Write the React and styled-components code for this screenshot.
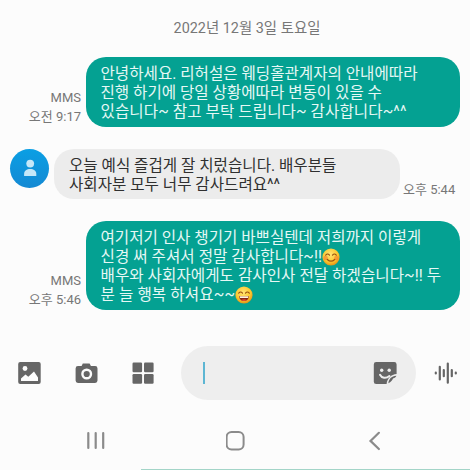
import React from 'react'
import styled, { createGlobalStyle } from 'styled-components'

const GlobalStyle = createGlobalStyle`
    * {
        box-sizing: border-box;
    }

    body {
        margin: 0;
        background: #fcfcfc;
        font-family: Roboto, 'Noto Sans CJK KR', sans-serif;
    }
`

const Screen = styled.main`
    width: 470px;
    height: 470px;
    overflow: hidden;
    display: flex;
    flex-direction: column;
    background: #fcfcfc;
`

const DateLabel = styled.div`
    height: 57px;
    line-height: 20px;
    padding-top: 19px;
    padding-left: 24px;
    text-align: center;
    font-size: 14.4px;
    color: #777;
    white-space: nowrap;
`

const Thread = styled.section`
    height: 289px;
    display: flex;
    flex-direction: column;
    gap: 22px;
`

const Message = styled.div`
    display: flex;
    align-items: flex-end;
    justify-content: ${props => props.$sent ? 'flex-end' : 'flex-start'};
    padding: 0 10px;
`

const Bubble = styled.div`
    width: ${props => props.$sent ? 374 : 346}px;
    padding: ${props => props.$sent ? '8px 14.5px 5px' : '8px 15px 4.5px'};
    border-radius: 20px;
    background: ${props => props.$sent ? '#04a192' : '#ececec'};
    color: ${props => props.$sent ? '#e6f8f5' : '#303030'};
    font-size: 15.6px;
`

const Line = styled.div`
    height: 18.9px;
    line-height: 18.9px;
    white-space: nowrap;
    letter-spacing: ${props => props.$spacing || 0}px;

    svg {
        vertical-align: -4px;
    }
`

const Meta = styled.div`
    margin: ${props => props.$sent ? '0 5px 0.5px 0' : '0 0 0 3px'};
    font-size: 13px;
    line-height: 19px;
    text-align: right;
    white-space: nowrap;
    color: #777;
`

const Avatar = styled.div`
    align-self: flex-start;
    width: 39px;
    height: 39px;
    margin-right: 5px;
    border-radius: 50%;
    background: linear-gradient(180deg, #0a9fe4, #1489d3);
    display: flex;
    align-items: center;
    justify-content: center;
`

const Toolbar = styled.div`
    height: 54px;
    display: flex;
    align-items: center;
    padding: 0 11px 0 17px;
    color: #666;
`

const Tools = styled.div`
    width: 163.5px;
    display: flex;
    gap: 32.5px;
`

const Input = styled.div`
    width: 235.5px;
    height: 54px;
    margin-right: 18px;
    padding: 0 19px 0 22px;
    border-radius: 27px;
    background: #eee;
    display: flex;
    align-items: center;
    justify-content: space-between;
`

const Caret = styled.span`
    width: 2px;
    height: 22px;
    background: #5db6d3;
`

const NavBar = styled.nav`
    height: 69px;
    display: flex;
    justify-content: space-between;
    padding: 30px 84px 0;
    color: #8b8b8b;
`

const Peek = styled.div`
    height: 1px;
    margin-left: 141px;
    background: #a3d5c8;
`

const PersonIcon = () => (
    <svg width='14' height='18' viewBox='0 0 14 18' fill='#c5e7f8'>
        <circle cx='7.2' cy='4.6' r='3.9' />
        <path d='M1.1 17v-2c0-3.200 2.700-4.900 6.100-4.900s6.100 1.700 6.100 4.900v2z' />
    </svg>
)

const ImageIcon = () => (
    <svg width='24' height='24' viewBox='0 0 24 24'>
        <rect x='1.2' y='1' width='22.5' height='22' rx='2' fill='currentColor' />
        <circle cx='8' cy='7.5' r='2.4' fill='#fcfcfc' />
        <path d='M4 20v-2.5l4.5-4 2.8 2.2 5.7-5.2 4 6V20z' fill='#fcfcfc' />
    </svg>
)

const CameraIcon = () => (
    <svg width='24' height='24' viewBox='0 0 24 24'>
        <path d='M4 5h3.6l1.2-2.6h6.8L16.9 5h4.2a2.4 2.4 0 0 1 2.4 2.4v12.2a2.4 2.4 0 0 1-2.4 2.4H4a2.4 2.4 0 0 1-2.4-2.4V7.4A2.4 2.4 0 0 1 4 5z' fill='currentColor' />
        <circle cx='12.7' cy='13' r='4.3' fill='none' stroke='#fcfcfc' strokeWidth='2.4' />
    </svg>
)

const GridIcon = () => (
    <svg width='24' height='24' viewBox='0 0 24 24' fill='currentColor'>
        <rect x='2.5' y='1.5' width='9.6' height='9.7' rx='1.2' />
        <rect x='14' y='1.5' width='9.6' height='9.7' rx='1.2' />
        <rect x='2.5' y='13' width='9.6' height='9.7' rx='1.2' />
        <rect x='14' y='13' width='9.6' height='9.7' rx='1.2' />
    </svg>
)

// square note with a smile, bottom right corner peels away
const StickerIcon = () => (
    <svg width='24' height='24' viewBox='0 0 24 24'>
        <path d='M3.2 1h18a2.4 2.4 0 0 1 2.4 2.4V13c-5.300.3-9.500 4.500-10 10.100H3.200A2.400 2.400 0 0 1 .8 20.700V3.400A2.400 2.400 0 0 1 3.200 1z' fill='currentColor' />
        <circle cx='8.7' cy='9.2' r='1.7' fill='#eee' />
        <circle cx='16.2' cy='9.2' r='1.7' fill='#eee' />
        <path d='M7 13.800c1.700 3.400 6 4.200 9.400 1.200' fill='none' stroke='#eee' strokeWidth='2' strokeLinecap='round' />
        <path d='M15.400 22.200c.3-4.200 3-7 8-7.500-.6 1.500-1.600 2.200-3.400 2.700-.5 1.900-2.100 3.500-4.600 4.800z' fill='currentColor' />
    </svg>
)

const WaveIcon = () => (
    <svg width='24' height='24' viewBox='0 0 24 24' stroke='currentColor' strokeWidth='2.2' strokeLinecap='round'>
        <path d='M1.800 11.700v.8M5.800 5.800v12.600M9.800 9v6.200M13.800 2.500v19.200M17.800 9v6.200M21.800 11.700v.8' />
    </svg>
)

const RecentsIcon = () => (
    <svg width='24' height='22' viewBox='0 0 24 22' stroke='currentColor' strokeWidth='2.2' strokeLinecap='round'>
        <path d='M4.300 3v15M11.700 3v15M19.200 3v15' />
    </svg>
)

const HomeIcon = () => (
    <svg width='22' height='22' viewBox='0 0 22 22' fill='none' stroke='currentColor' strokeWidth='2'>
        <rect x='1' y='2' width='17' height='17.5' rx='5' transform='translate(-.4 0)' />
    </svg>
)

const BackIcon = () => (
    <svg width='20' height='22' viewBox='0 0 20 22' fill='none' stroke='currentColor' strokeWidth='2.2' strokeLinecap='round'>
        <path d='M12.900 2.800L4.500 10.900l8.400 8.100' />
    </svg>
)

const Emoji = ({ laughing }) => (
    <svg width='18' height='18' viewBox='0 0 18 18' fill='none' strokeLinecap='round'>
        <defs>
            <radialGradient id={laughing ? 'laugh' : 'smile'} cx='.45' cy='.35' r='.65'>
                <stop offset='0' stopColor='#ffe476' />
                <stop offset='.65' stopColor='#fcc92f' />
                <stop offset='1' stopColor='#e39216' />
            </radialGradient>
        </defs>
        <circle cx='9' cy='9' r='8.6' fill={laughing ? 'url(#laugh)' : 'url(#smile)'} />
        {!laughing && <g fill='#f37735' opacity='.55'>
            <circle cx='3.6' cy='10' r='2.3' />
            <circle cx='14.4' cy='10' r='2.3' />
        </g>}
        <path d='M3.7 7.2q1.9-2.4 3.8 0M10.5 7.2q1.9-2.4 3.8 0' stroke='#99510f' strokeWidth='1.1' />
        {laughing
            ? <g>
                <path d='M4 10h10c-.3 3.4-2.2 5-5 5s-4.7-1.6-5-5z' fill='#872713' />
                <path d='M4.5 10.2h9l-.5 1.7H5z' fill='#fff3dc' />
                <path d='M6 13.9q3-1.5 6 0-3 2-6 0z' fill='#e54d35' />
            </g>
            : <path d='M5.3 11.5q3.7 3.4 7.4 0' stroke='#99510f' strokeWidth='1.2' />
        }
    </svg>
)

const App = () => (
    <Screen>
        <GlobalStyle />
        <DateLabel>2022년 12월 3일 토요일</DateLabel>
        <Thread>
            <Message $sent>
                <Meta $sent>MMS<br />오전 9:17</Meta>
                <Bubble $sent>
                    <Line>안녕하세요. 리허설은 웨딩홀관계자의 안내에따라</Line>
                    <Line>진행 하기에 당일 상황에따라 변동이 있을 수</Line>
                    <Line $spacing={0.07}>있습니다~ 참고 부탁 드립니다~ 감사합니다~^^</Line>
                </Bubble>
            </Message>
            <Message>
                <Avatar><PersonIcon /></Avatar>
                <Bubble>
                    <Line>오늘 예식 즐겁게 잘 치렀습니다. 배우분들</Line>
                    <Line>사회자분 모두 너무 감사드려요^^</Line>
                </Bubble>
                <Meta>오후 5:44</Meta>
            </Message>
            <Message $sent>
                <Meta $sent>MMS<br />오후 5:46</Meta>
                <Bubble $sent>
                    <Line>여기저기 인사 챙기기 바쁘실텐데 저희까지 이렇게</Line>
                    <Line $spacing={0.05}>신경 써 주셔서 정말 감사합니다~!!<Emoji /></Line>
                    <Line $spacing={0.05}>배우와 사회자에게도 감사인사 전달 하겠습니다~!! 두</Line>
                    <Line $spacing={0.12}>분 늘 행복 하셔요~~<Emoji laughing /></Line>
                </Bubble>
            </Message>
        </Thread>
        <Toolbar>
            <Tools>
                <ImageIcon />
                <CameraIcon />
                <GridIcon />
            </Tools>
            <Input>
                <Caret />
                <StickerIcon />
            </Input>
            <WaveIcon />
        </Toolbar>
        <NavBar>
            <RecentsIcon />
            <HomeIcon />
            <BackIcon />
        </NavBar>
        <Peek />
    </Screen>
)

export default App
